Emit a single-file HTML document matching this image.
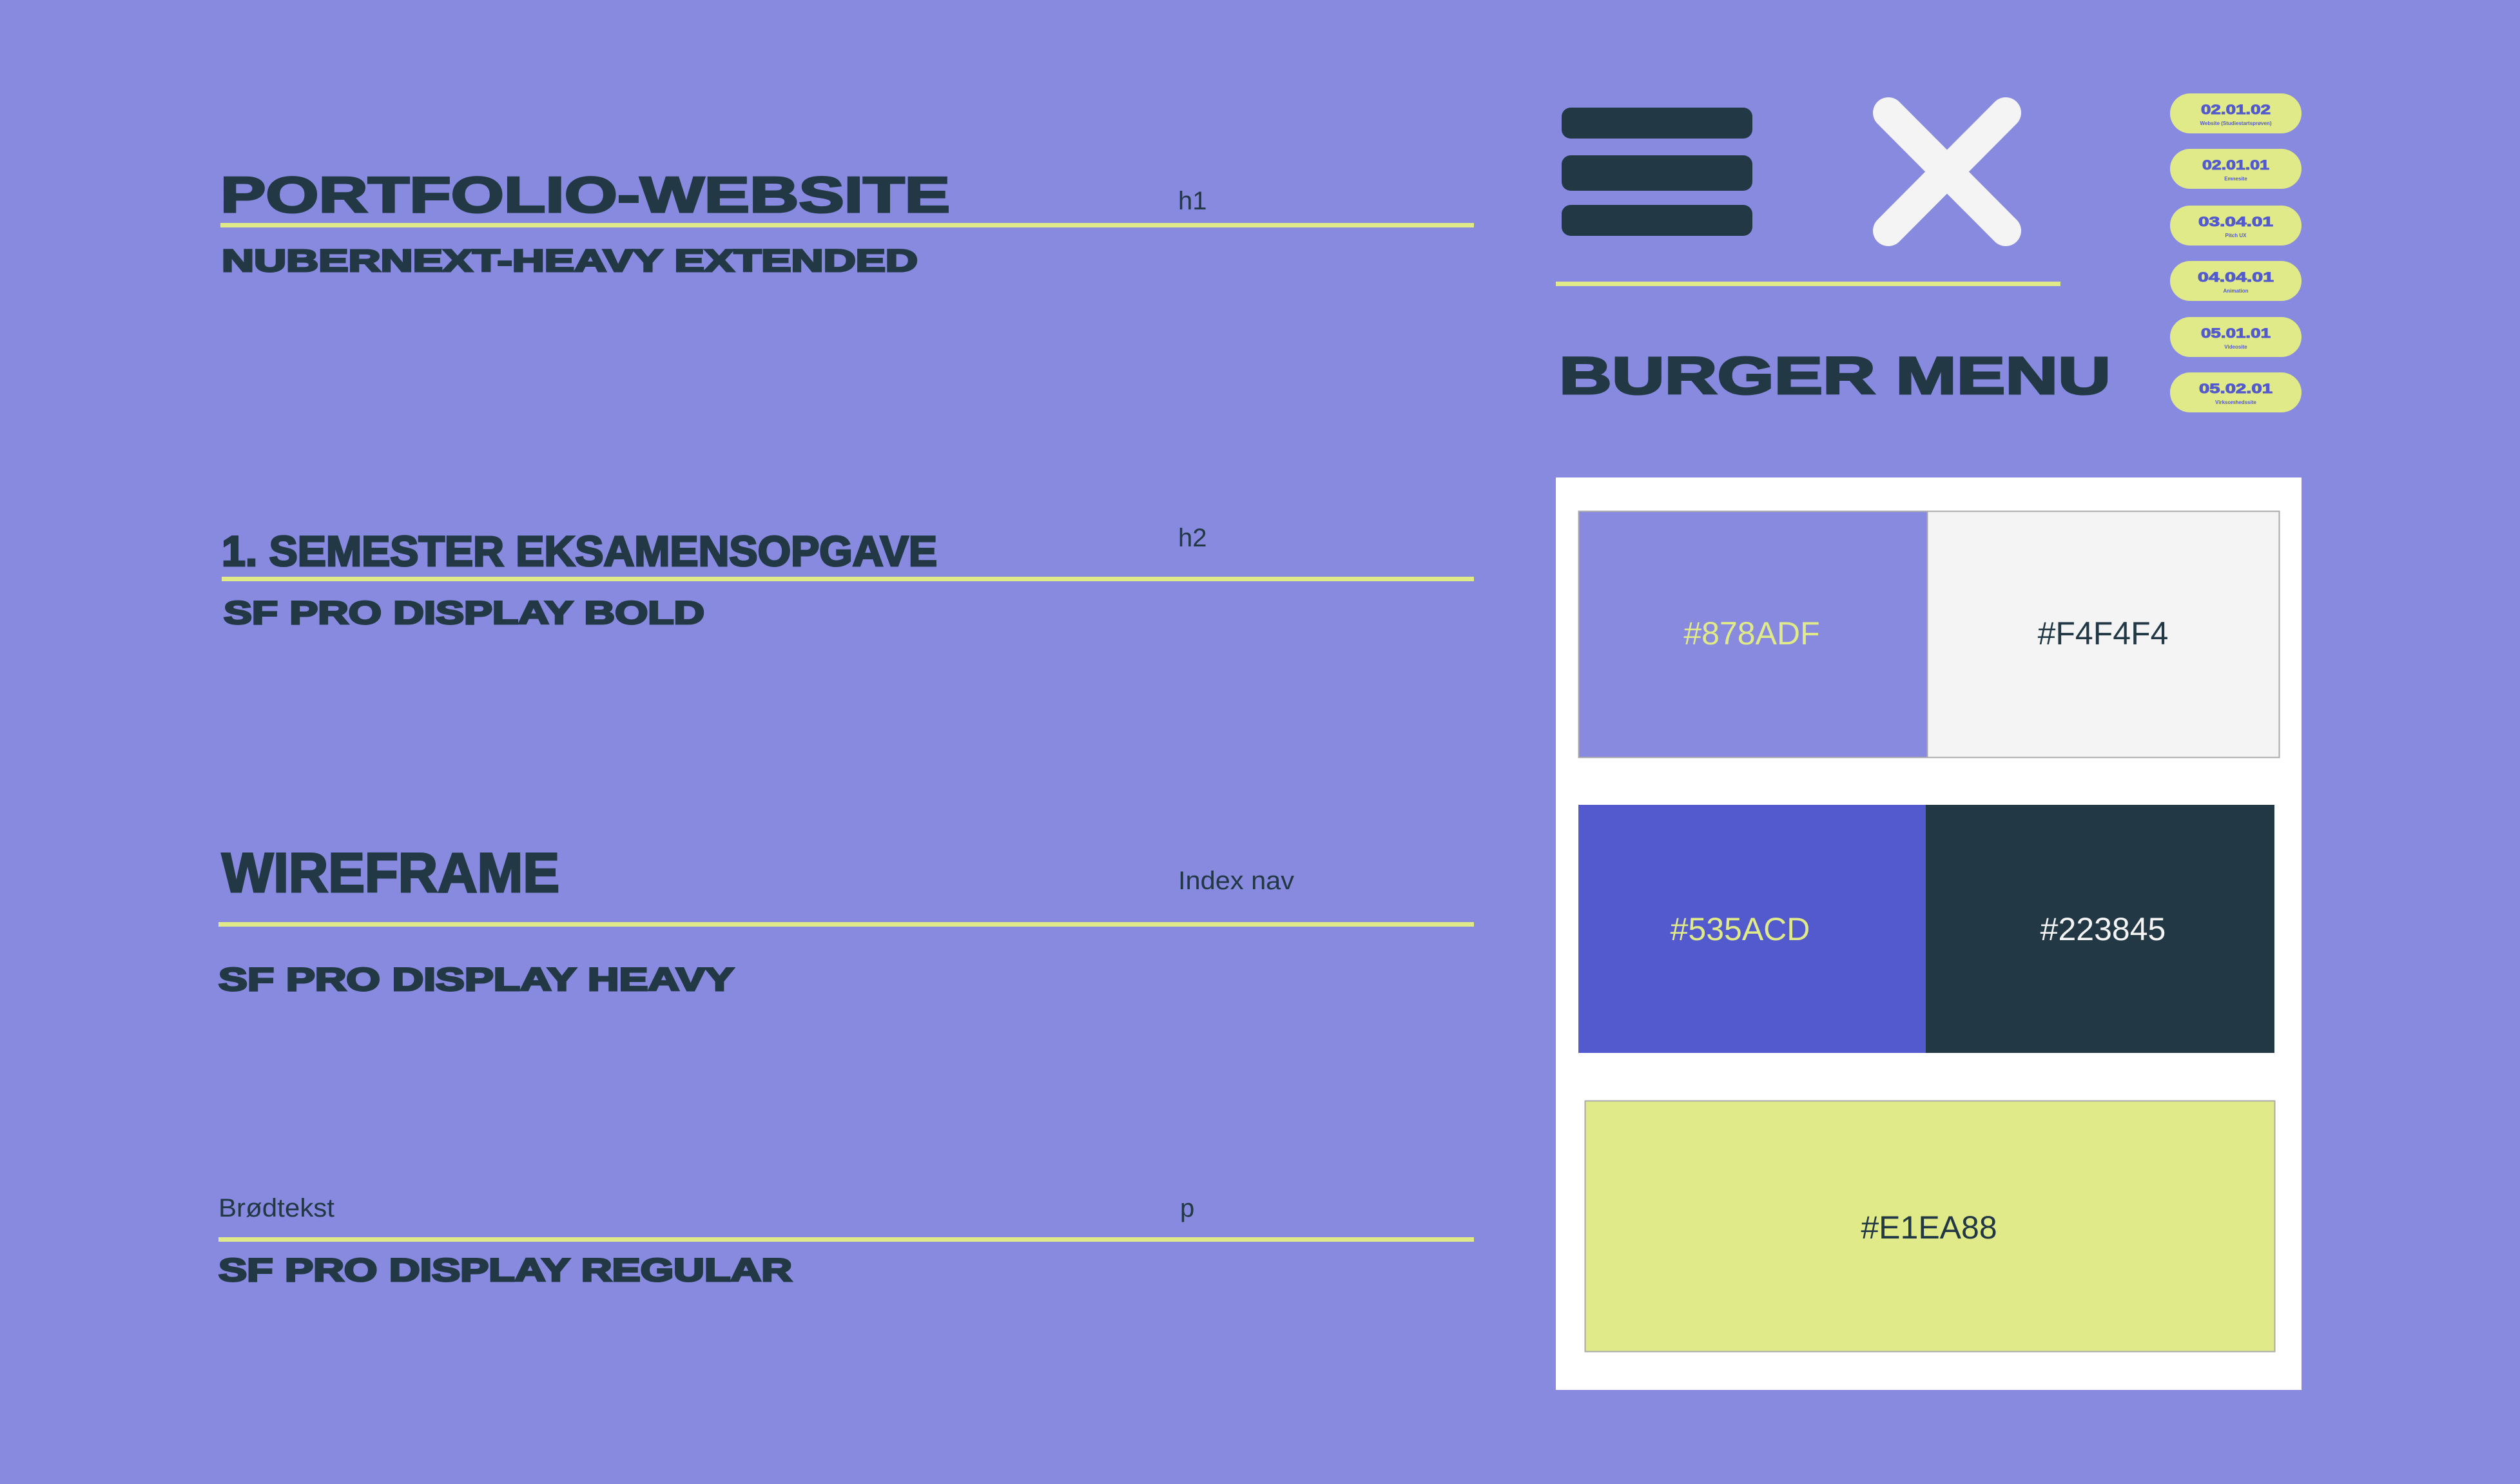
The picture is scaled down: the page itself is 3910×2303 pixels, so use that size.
<!DOCTYPE html>
<html><head><meta charset="utf-8"><style>
html,body{margin:0;padding:0;background:#878ADF;}
svg{display:block;}
text{font-family:"Liberation Sans",sans-serif;}
</style></head><body>
<svg width="3910" height="2303" viewBox="0 0 3910 2303" xmlns="http://www.w3.org/2000/svg">
<rect width="3910" height="2303" fill="#878ADF"/>
<g fill="#223845">
<g stroke="#223845" stroke-width="3">
<text x="342" y="329" font-size="78" font-weight="bold" textLength="1132" lengthAdjust="spacingAndGlyphs">PORTFOLIO-WEBSITE</text>
<text x="344" y="421" font-size="48" font-weight="bold" textLength="1080" lengthAdjust="spacingAndGlyphs">NUBERNEXT-HEAVY EXTENDED</text>
<text x="344" y="878" font-size="66" font-weight="bold" textLength="1110" lengthAdjust="spacingAndGlyphs">1. SEMESTER EKSAMENSOPGAVE</text>
<text x="347" y="968" font-size="50" font-weight="bold" textLength="746" lengthAdjust="spacingAndGlyphs">SF PRO DISPLAY BOLD</text>
<text x="344" y="1384" font-size="86" font-weight="bold" textLength="524" lengthAdjust="spacingAndGlyphs">WIREFRAME</text>
<text x="339" y="1537" font-size="50" font-weight="bold" textLength="800" lengthAdjust="spacingAndGlyphs">SF PRO DISPLAY HEAVY</text>
<text x="339" y="1988" font-size="50" font-weight="bold" textLength="890" lengthAdjust="spacingAndGlyphs">SF PRO DISPLAY REGULAR</text>
</g>
<text x="1828" y="325" font-size="40">h1</text>
<text x="1828" y="848" font-size="40">h2</text>
<text x="1828" y="1380" font-size="40" textLength="180" lengthAdjust="spacingAndGlyphs">Index nav</text>
<text x="339" y="1888" font-size="40" textLength="180" lengthAdjust="spacingAndGlyphs">Brødtekst</text>
<text x="1831" y="1888" font-size="40">p</text>
</g>
<g fill="#E1EA88">
<rect x="342" y="346" width="1945" height="7"/>
<rect x="344" y="895" width="1943" height="7"/>
<rect x="339" y="1431" width="1948" height="7"/>
<rect x="339" y="1920" width="1948" height="7"/>
<rect x="2414" y="437" width="783" height="7"/>
</g>
<g fill="#223845">
<rect x="2423" y="167" width="296" height="48" rx="14"/>
<rect x="2423" y="241" width="296" height="55" rx="14"/>
<rect x="2423" y="318" width="296" height="48" rx="14"/>
</g>
<g stroke="#F4F4F4" stroke-width="48" stroke-linecap="round">
<line x1="2930" y1="175" x2="3112" y2="358"/>
<line x1="3112" y1="175" x2="2930" y2="358"/>
</g>
<text x="2419" y="611" font-size="82" font-weight="bold" fill="#223845" stroke="#223845" stroke-width="3" textLength="856" lengthAdjust="spacingAndGlyphs">BURGER MENU</text>
<g font-weight="bold" fill="#535ACD" text-anchor="middle">
<rect x="3367" y="145" width="204" height="62" rx="31" fill="#E1EA88"/>
<text x="3469" y="177" font-size="21" textLength="108" lengthAdjust="spacingAndGlyphs" stroke="#535ACD" stroke-width="1">02.01.02</text>
<text x="3469" y="194" font-size="8">Website (Studiestartsprøven)</text>
<rect x="3367" y="231" width="204" height="62" rx="31" fill="#E1EA88"/>
<text x="3469" y="263" font-size="21" textLength="104" lengthAdjust="spacingAndGlyphs" stroke="#535ACD" stroke-width="1">02.01.01</text>
<text x="3469" y="280" font-size="8">Emnesite</text>
<rect x="3367" y="319" width="204" height="62" rx="31" fill="#E1EA88"/>
<text x="3469" y="351" font-size="21" textLength="116" lengthAdjust="spacingAndGlyphs" stroke="#535ACD" stroke-width="1">03.04.01</text>
<text x="3469" y="368" font-size="8">Pitch UX</text>
<rect x="3367" y="405" width="204" height="62" rx="31" fill="#E1EA88"/>
<text x="3469" y="437" font-size="21" textLength="118" lengthAdjust="spacingAndGlyphs" stroke="#535ACD" stroke-width="1">04.04.01</text>
<text x="3469" y="454" font-size="8">Animation</text>
<rect x="3367" y="492" width="204" height="62" rx="31" fill="#E1EA88"/>
<text x="3469" y="524" font-size="21" textLength="108" lengthAdjust="spacingAndGlyphs" stroke="#535ACD" stroke-width="1">05.01.01</text>
<text x="3469" y="541" font-size="8">Videosite</text>
<rect x="3367" y="578" width="204" height="62" rx="31" fill="#E1EA88"/>
<text x="3469" y="610" font-size="21" textLength="114" lengthAdjust="spacingAndGlyphs" stroke="#535ACD" stroke-width="1">05.02.01</text>
<text x="3469" y="627" font-size="8">Virksomhedssite</text>
</g>
<rect x="2414" y="741" width="1157" height="1416" fill="#FFFFFF"/>
<rect x="2449.5" y="793.5" width="541" height="382" fill="#878ADF" stroke="#AAAAAA" stroke-width="2"/>
<rect x="2990.5" y="793.5" width="546" height="382" fill="#F4F4F4" stroke="#AAAAAA" stroke-width="2"/>
<rect x="2449" y="1249" width="539" height="385" fill="#535ACD"/>
<rect x="2988" y="1249" width="541" height="385" fill="#223845"/>
<rect x="2459.5" y="1708.5" width="1070" height="389" fill="#E1EA88" stroke="#AAAAAA" stroke-width="2"/>
<g font-size="50" text-anchor="middle">
<text x="2718" y="1000" fill="#E1EA88">#878ADF</text>
<text x="3263" y="1000" fill="#223845">#F4F4F4</text>
<text x="2700" y="1459" fill="#E1EA88">#535ACD</text>
<text x="3263" y="1459" fill="#F4F4F4">#223845</text>
<text x="2993" y="1922" fill="#223845">#E1EA88</text>
</g>
</svg>
</body></html>
